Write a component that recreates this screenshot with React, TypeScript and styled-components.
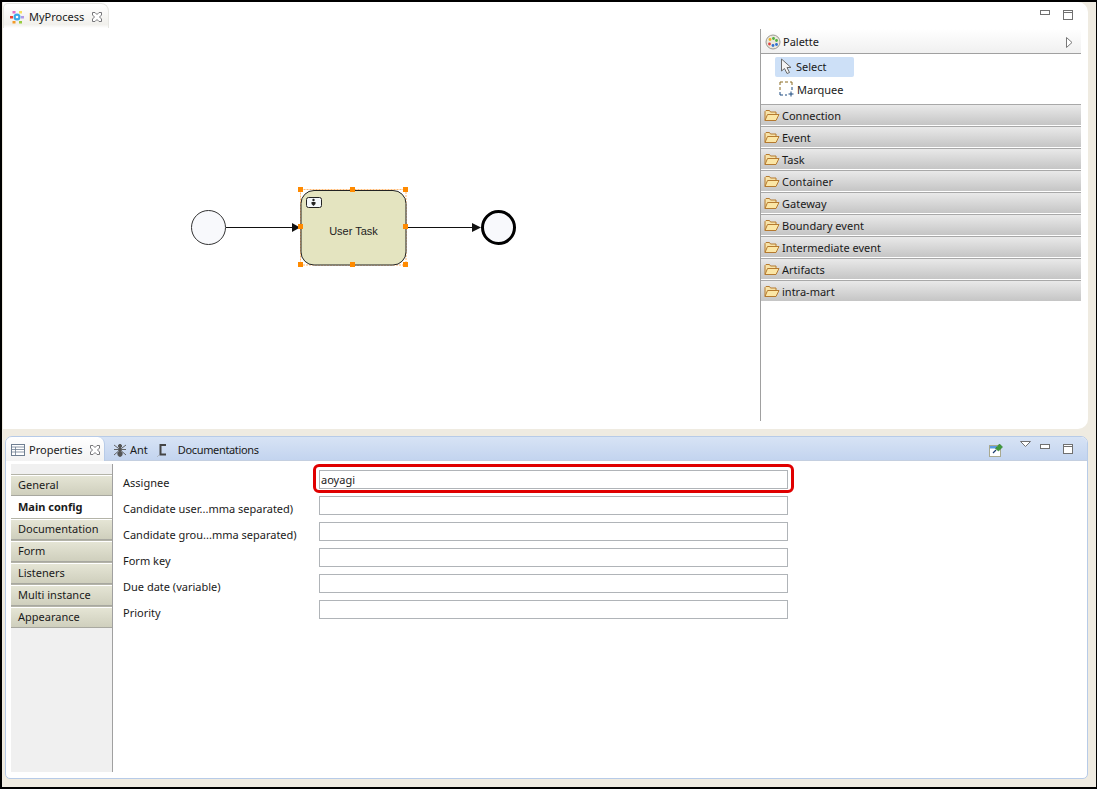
import React from "react";
import styled, { createGlobalStyle } from "styled-components";

const Global = createGlobalStyle`
  html, body { margin: 0; padding: 0; background: #000; }
  * { box-sizing: border-box; }
`;

const Frame = styled.div`
  width: 1097px;
  height: 789px;
  padding: 2px 1px 2px 2px;
  background: #000;
  overflow: hidden;
  font-family: "Noto Sans", "Open Sans", sans-serif;
  font-size: 11px;
  color: #1a1a1a;
`;

const Workbench = styled.div`
  height: 785px;
  background: #efebe1;
  padding: 0 8px 8px 1px;
  display: flex;
  flex-direction: column;
`;

const EditorPane = styled.section`
  height: 427px;
  flex: none;
  background: #fff;
  border-radius: 0 10px 10px 0;
  display: flex;
  flex-direction: column;
`;

const EditorBar = styled.div`
  height: 27px;
  flex: none;
  display: flex;
  align-items: flex-start;
  justify-content: space-between;
`;

const EditorTab = styled.div`
  width: 106px;
  height: 25px;
  margin-top: 1px;
  padding: 2px 0 0 5px;
  display: flex;
  align-items: center;
  gap: 4px;
  border: 1px solid #e6e6e2;
  border-bottom: 0;
  border-radius: 5px 8px 0 0;
  background: linear-gradient(#fff, #f1f0ec 85%, #fff);
`;

const TabLabel = styled.span<{ $gapAfter?: number; $tight?: boolean }>`
  white-space: nowrap;
  line-height: 16px;
  margin-right: ${(p) => p.$gapAfter ?? 0}px;
  letter-spacing: ${(p) => (p.$tight ? "-0.35px" : "normal")};
`;

const WindowButtons = styled.div<{ $top: number; $right: number }>`
  display: flex;
  align-items: flex-start;
  gap: 13px;
  margin: ${(p) => p.$top}px ${(p) => p.$right}px 0 0;
`;

const EditorBody = styled.div`
  height: 392px;
  flex: none;
  display: flex;
  padding-right: 7px;
`;

const Canvas = styled.div`
  width: 757px;
  flex: none;
`;

const Palette = styled.aside`
  flex: 1;
  border-left: 1px solid #a0a0a0;
  display: flex;
  flex-direction: column;
`;

const PaletteHeader = styled.div`
  height: 25px;
  flex: none;
  display: flex;
  align-items: center;
  gap: 2px;
  padding: 2px 8px 0 4px;
  background: linear-gradient(#fff, #f0f0f0);
  border-bottom: 1px solid #a0a0a0;
`;

const PaletteTitle = styled.span`
  flex: 1;
  line-height: 16px;
`;

const Tools = styled.div`
  height: 50px;
  flex: none;
  padding: 3px 0 0 14px;
  display: flex;
  flex-direction: column;
  gap: 3px;
`;

const Tool = styled.div<{ $selected?: boolean }>`
  width: 79px;
  height: 20px;
  padding: 0 0 2px 4px;
  display: flex;
  align-items: center;
  gap: 3px;
  border-radius: 2px;
  background: ${(p) => (p.$selected ? "#cde0f7" : "transparent")};
`;

const Drawer = styled.div`
  height: 22px;
  flex: none;
  padding: 1px 0 0 3px;
  display: flex;
  align-items: center;
  gap: 2px;
  border-top: 1px solid #a8a8a8;
  border-bottom: 1px solid #fff;
  background: linear-gradient(#e9e9e9, #c5c5c5);
`;

const PropertiesPane = styled.section`
  height: 343px;
  margin: 7px 0 0 2px;
  background: #fff;
  border: 1px solid #b7cbe8;
  border-radius: 7px 7px 5px 5px;
  display: flex;
  flex-direction: column;
  overflow: hidden;
`;

const PropertiesBar = styled.div`
  height: 24px;
  flex: none;
  display: flex;
  align-items: flex-start;
  background: linear-gradient(#d7e3f5, #c3d4ef);
  border-bottom: 1px solid #c4cfe0;
`;

const ActiveViewTab = styled.div`
  width: 99px;
  height: 24px;
  flex: none;
  padding: 2px 0 0 5px;
  display: flex;
  align-items: center;
  gap: 4px;
  background: linear-gradient(#fff, #f2f2f2);
  border-right: 1px solid #b7cbe8;
  border-radius: 0 7px 0 0;
`;

const ViewTab = styled.div<{ $gap: number }>`
  height: 24px;
  flex: none;
  padding: 2px 0 0 8px;
  display: flex;
  align-items: center;
  gap: ${(p) => p.$gap}px;
`;

const BarSpacer = styled.div`
  flex: 1;
`;

const PinButton = styled.div`
  width: 16px;
  height: 16px;
  margin: 5px 16px 0 0;
`;

const PropertiesBody = styled.div`
  flex: 1;
  display: flex;
  padding: 3px 0 6px 5px;
`;

const Sidebar = styled.nav`
  width: 102px;
  flex: none;
  background: #f0f0f0;
  border-right: 1px solid #a0a0a0;
  padding-top: 10px;
`;

const SideTab = styled.div<{ $active?: boolean }>`
  height: 22px;
  padding: 0 0 0 7px;
  display: flex;
  align-items: center;
  line-height: 16px;
  white-space: nowrap;
  font-weight: ${(p) => (p.$active ? 700 : 400)};
  background: ${(p) => (p.$active ? "#fff" : "linear-gradient(#e6e6d6, #cfcfbd)")};
  border-top: ${(p) => (p.$active ? "0" : "1px solid #b4b4a8")};
  border-bottom: ${(p) => (p.$active ? "0" : "1px solid #a8a8a0")};
  box-shadow: ${(p) => (p.$active ? "none" : "inset 0 1px 0 #fff")};
`;

const Form = styled.div`
  padding: 6px 0 0 10px;
  display: grid;
  grid-template-columns: 196px 469px;
  grid-auto-rows: 19px;
  row-gap: 7px;
  align-items: center;
`;

const FieldLabel = styled.label`
  white-space: nowrap;
  line-height: 16px;
  padding-top: 6px;
`;

const FieldBox = styled.div<{ $highlighted?: boolean }>`
  position: relative;
  height: 19px;
  padding-left: 1px;
  display: flex;
  align-items: center;
  border: 1px solid #b0b4b8;
  line-height: 16px;

  ${(p) =>
    p.$highlighted
      ? `&::after {
    content: "";
    position: absolute;
    inset: -7px -7px -5px -7px;
    border: 3px solid #e00000;
    border-radius: 6px;
  }`
      : ""}
`;

const CloseIcon = () => (
  <svg width="12" height="12" viewBox="0 0 12 12" fill="#fff" stroke="#77777a" strokeWidth="1">
    <path d="M1.5 1.5h2.5l2 2 2-2h2.5v2.5l-2 2 2 2v2.5h-2.5l-2-2-2 2h-2.5v-2.5l2-2-2-2z" />
  </svg>
);

const MinimizeIcon = () => (
  <svg width="10" height="5" viewBox="0 0 10 5" fill="#fff" stroke="#707070">
    <rect x="0.5" y="0.5" width="9" height="4" />
  </svg>
);

const MaximizeIcon = () => (
  <svg width="10" height="10" viewBox="0 0 10 10" fill="#fff" stroke="#707070">
    <rect x="0.5" y="0.5" width="9" height="9" />
    <path d="M0 2.5h10" />
  </svg>
);

const ProcessIcon = () => (
  <svg width="16" height="16" viewBox="0 0 16 16">
    <circle cx="8" cy="8" r="3.5" fill="#3aa7e8" />
    <circle cx="8" cy="8" r="1.3" fill="#fff" />
    <rect x="3.5" y="2" width="3" height="2.5" fill="#e070c8" />
    <rect x="10" y="2" width="3" height="2.5" fill="#f4e060" />
    <rect x="1" y="7" width="3" height="2.5" fill="#ee4030" />
    <rect x="12" y="7" width="3" height="2.5" fill="#b09ae8" />
    <rect x="3.5" y="12" width="3" height="2.5" fill="#f49a28" />
    <rect x="10" y="12" width="3" height="2.5" fill="#98cc40" />
  </svg>
);

const PaletteIcon = () => (
  <svg width="16" height="16" viewBox="0 0 16 16">
    <circle cx="8" cy="8" r="7" fill="#ece8dc" stroke="#9a9a94" />
    <circle cx="5" cy="5.5" r="1.4" fill="#e8b020" />
    <circle cx="8.5" cy="4.5" r="1.4" fill="#50b040" />
    <circle cx="11.5" cy="6.5" r="1.4" fill="#50b040" />
    <circle cx="4.5" cy="10" r="1.4" fill="#e04040" />
    <circle cx="8" cy="11.5" r="1.4" fill="#3070d0" />
    <circle cx="11.5" cy="10.5" r="1.4" fill="#3070d0" />
  </svg>
);

const CollapseArrow = () => (
  <svg width="7" height="11" viewBox="0 0 7 11" fill="#fff" stroke="#777">
    <path d="M0.5 0.5L6 5.5L0.5 10.5z" />
  </svg>
);

const CursorIcon = () => (
  <svg width="14" height="17" viewBox="0 0 14 17" fill="#f4f4f4" stroke="#6a6a6a">
    <path d="M2.5 1v12l3-2.5 2.5 5 2.5-1-2.5-5h4z" />
  </svg>
);

const MarqueeIcon = () => (
  <svg width="15" height="16" viewBox="0 0 15 16" fill="none">
    <path d="M1 4V1h3M6 1h3M11 1h2v3M1 6v3" stroke="#8a6a20" />
    <path d="M13 6v3M1 11v3h3M6 14h2" stroke="#1c4a80" />
    <path d="M12 10.5v5M9.5 13h5" stroke="#1c4a80" />
  </svg>
);

const FolderIcon = () => (
  <svg width="16" height="13" viewBox="0 0 16 13">
    <path d="M1 11.5V2.5L2 1.5h3.5l1 1.5h5.5v2" fill="#f7e3a8" stroke="#b57a30" />
    <path d="M1 11.5L3.5 5.5H15L12 11.5z" fill="#fbe6a6" stroke="#b57a30" />
  </svg>
);

const TableIcon = () => (
  <svg width="14" height="12" viewBox="0 0 14 12" fill="#fff" stroke="#6f7f92">
    <rect x="0.5" y="0.5" width="13" height="11" />
    <path d="M0.5 3h13M0.5 5.5h13M0.5 8h13M4.5 3v8.5" strokeWidth="0.8" />
  </svg>
);

const AntIcon = () => (
  <svg width="14" height="14" viewBox="0 0 14 14" fill="#555" stroke="#555">
    <ellipse cx="7" cy="3" rx="1.6" ry="1.6" />
    <ellipse cx="7" cy="6.5" rx="1.6" ry="1.8" />
    <ellipse cx="7" cy="10.8" rx="2.2" ry="2.6" />
    <path d="M1 2l4 3M13 2L9 5M1 6.5h4M13 6.5H9M1 12l4-3.5M13 12L9 8.5" fill="none" strokeWidth="0.9" />
  </svg>
);

const DocsIcon = () => (
  <svg width="12" height="14" viewBox="0 0 12 14" fill="none">
    <path d="M10 2H4.5v9.5H10" stroke="#444" strokeWidth="2" />
    <path d="M1.5 13.5l1-1" stroke="#999" />
  </svg>
);

const PinIcon = () => (
  <svg width="16" height="16" viewBox="0 0 16 16">
    <rect x="1.5" y="3.5" width="11" height="11" fill="#fff" stroke="#a9a98f" />
    <rect x="2" y="4" width="7" height="2.5" fill="#5a9ae0" />
    <path d="M5 11l3-3" stroke="#1c3c70" strokeWidth="1.2" />
    <path d="M7.5 6.5l4-4.5 3 3-4 4z" fill="#3f9a3a" stroke="#2c7a2c" strokeWidth="0.6" />
  </svg>
);

const MenuArrow = () => (
  <svg width="11" height="6" viewBox="0 0 11 6" fill="#fff" stroke="#707070">
    <path d="M0.5 0.5h10L5.5 5.5z" />
  </svg>
);

const HANDLES: [number, number][] = [
  [298, 187], [350, 187], [403, 187],
  [298, 224], [403, 224],
  [298, 262], [350, 262], [403, 262],
];

const Diagram = () => (
  <svg width="757" height="392" viewBox="3 29 757 392" style={{ display: "block" }}>
    <circle cx="208.5" cy="227.5" r="17" fill="#f8f9fc" stroke="#333" strokeWidth="1" />
    <path d="M226 227.5H296" stroke="#111" strokeWidth="1" />
    <path d="M292 223l8 4.5-8 4.5z" fill="#111" />
    <rect x="300.5" y="189.5" width="105.5" height="75.5" fill="none" stroke="#ff9a30" strokeWidth="0.7" strokeDasharray="2 1" />
    <rect x="301" y="190.5" width="105" height="74.5" rx="13" fill="#e4e4c0" stroke="#222" strokeWidth="1" />
    <rect x="306.5" y="197.5" width="15" height="10" rx="2" fill="#f4f8fc" stroke="#222" />
    <circle cx="313.5" cy="200" r="1.2" fill="#222" />
    <path d="M311.5 202h4v2l-2 2-2-2z" fill="#222" />
    <text
      x="353.5"
      y="235"
      textAnchor="middle"
      fontFamily="'Liberation Sans', Arial, sans-serif"
      fontSize="11"
      fill="#222"
    >
      User Task
    </text>
    <path d="M406 227.5H476" stroke="#111" strokeWidth="1" />
    <path d="M472 223l9 4.5-9 4.5z" fill="#111" />
    <circle cx="498.5" cy="227.5" r="16" fill="#f8f9fc" stroke="#000" strokeWidth="3" />
    {HANDLES.map(([x, y]) => (
      <rect key={`${x}-${y}`} x={x} y={y} width="5" height="5" fill="#ff8a00" />
    ))}
  </svg>
);

const DRAWERS = [
  "Connection",
  "Event",
  "Task",
  "Container",
  "Gateway",
  "Boundary event",
  "Intermediate event",
  "Artifacts",
  "intra-mart",
];

const SECTIONS = [
  "General",
  "Main config",
  "Documentation",
  "Form",
  "Listeners",
  "Multi instance",
  "Appearance",
];

const FIELDS: { label: string; value?: string }[] = [
  { label: "Assignee", value: "aoyagi" },
  { label: "Candidate user...mma separated)" },
  { label: "Candidate grou...mma separated)" },
  { label: "Form key" },
  { label: "Due date (variable)" },
  { label: "Priority" },
];

export default function App() {
  return (
    <Frame>
      <Global />
      <Workbench>
        <EditorPane>
          <EditorBar>
            <EditorTab>
              <ProcessIcon />
              <TabLabel $gapAfter={3}>MyProcess</TabLabel>
              <CloseIcon />
            </EditorTab>
            <WindowButtons $top={8} $right={15}>
              <MinimizeIcon />
              <MaximizeIcon />
            </WindowButtons>
          </EditorBar>
          <EditorBody>
            <Canvas>
              <Diagram />
            </Canvas>
            <Palette>
              <PaletteHeader>
                <PaletteIcon />
                <PaletteTitle>Palette</PaletteTitle>
                <CollapseArrow />
              </PaletteHeader>
              <Tools>
                <Tool $selected>
                  <CursorIcon />
                  <span>Select</span>
                </Tool>
                <Tool>
                  <MarqueeIcon />
                  <span>Marquee</span>
                </Tool>
              </Tools>
              {DRAWERS.map((name) => (
                <Drawer key={name}>
                  <FolderIcon />
                  <span>{name}</span>
                </Drawer>
              ))}
            </Palette>
          </EditorBody>
        </EditorPane>
        <PropertiesPane>
          <PropertiesBar>
            <ActiveViewTab>
              <TableIcon />
              <TabLabel $gapAfter={3}>Properties</TabLabel>
              <CloseIcon />
            </ActiveViewTab>
            <ViewTab $gap={3}>
              <AntIcon />
              <TabLabel>Ant</TabLabel>
            </ViewTab>
            <ViewTab $gap={10}>
              <DocsIcon />
              <TabLabel $tight>Documentations</TabLabel>
            </ViewTab>
            <BarSpacer />
            <PinButton>
              <PinIcon />
            </PinButton>
            <WindowButtons $top={4} $right={9}>
              <MenuArrow />
            </WindowButtons>
            <WindowButtons $top={7} $right={14}>
              <MinimizeIcon />
              <MaximizeIcon />
            </WindowButtons>
          </PropertiesBar>
          <PropertiesBody>
            <Sidebar>
              {SECTIONS.map((name) => (
                <SideTab key={name} $active={name === "Main config"}>
                  {name}
                </SideTab>
              ))}
            </Sidebar>
            <Form>
              {FIELDS.map((f, i) => (
                <React.Fragment key={f.label}>
                  <FieldLabel>{f.label}</FieldLabel>
                  <FieldBox $highlighted={i === 0}>{f.value}</FieldBox>
                </React.Fragment>
              ))}
            </Form>
          </PropertiesBody>
        </PropertiesPane>
      </Workbench>
    </Frame>
  );
}
